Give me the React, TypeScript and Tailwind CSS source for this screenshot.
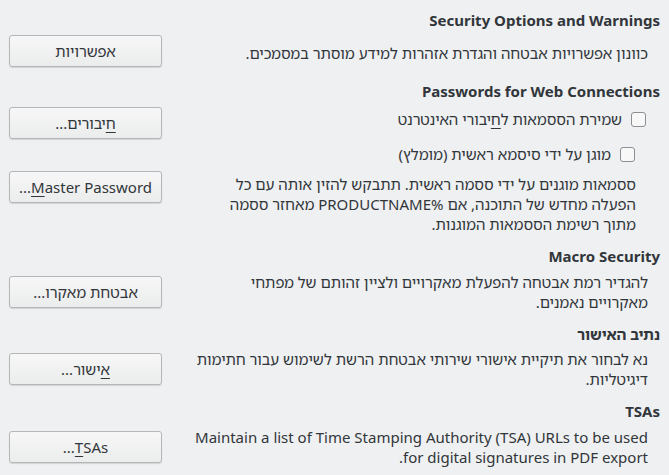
import type { ReactNode } from 'react';

/** כותרת קטע */
function Heading({ children }: { children: ReactNode }) {
  return <div className="h-5 font-bold leading-5">{children}</div>;
}

/** כפתור בסגנון Breeze */
function Button({ children }: { children: ReactNode }) {
  return (
    <button
      type="button"
      className="h-8 w-[153px] shrink-0 rounded-[3px] border border-[#b4b6b8] bg-gradient-to-b from-[#f7f7f7] to-[#ebecec] text-center leading-5 text-[#31363b] shadow-[0_1px_1px_rgba(0,0,0,0.12)]"
    >
      {children}
    </button>
  );
}

/** אות מקוצר מקלדת */
function Mn({ children }: { children: ReactNode }) {
  return <span className="underline underline-offset-[3px]">{children}</span>;
}

function CheckRow({ indent, children }: { indent: string; children: ReactNode }) {
  return (
    <div className={`flex h-5 items-center gap-[9px] ${indent}`}>
      <span className="h-[15px] w-[15px] shrink-0 rounded-[3px] border border-[#8c8f93] bg-[#f8f8f8]" />
      <span>{children}</span>
    </div>
  );
}

export default function App() {
  return (
    <div
      dir="rtl"
      className="h-[475px] w-[669px] overflow-hidden bg-[#eff0f1] px-[9px] pt-[10px] font-['Noto_Sans','Noto_Sans_Hebrew','DejaVu_Sans',sans-serif] text-[15px] leading-5 text-[#31363b]"
    >
      {/* Security Options and Warnings */}
      <Heading>Security Options and Warnings</Heading>
      <div className="mt-[5px] flex items-center gap-[30px]">
        <p className="min-w-0 flex-1 pr-3 pt-1">
          כוונון אפשרויות אבטחה והגדרת אזהרות למידע מוסתר במסמכים.
        </p>
        <Button>אפשרויות</Button>
      </div>

      {/* Passwords for Web Connections */}
      <div className="mt-[14px]">
        <Heading>Passwords for Web Connections</Heading>
      </div>
      <div className="mt-[6px] flex items-start gap-[30px]">
        <div className="min-w-0 flex-1 pt-[2px]">
          <CheckRow indent="pr-[14px]">
            שמירת הססמאות ל<Mn>ח</Mn>יבורי האינטרנט
          </CheckRow>
        </div>
        <Button>
          <Mn>ח</Mn>יבורים...
        </Button>
      </div>
      <div className="mt-[5px]">
        <CheckRow indent="pr-[25px]">מוגן על ידי סיסמא ראשית (מומלץ)</CheckRow>
      </div>
      <div className="mt-[7px] flex items-start gap-[46px]">
        <p className="min-w-0 flex-1 pr-[24px] pt-[3px]">
          ססמאות מוגנים על ידי ססמה ראשית. תתבקש להזין אותה עם כל הפעלה מחדש של התוכנה, אם %PRODUCTNAME מאחזר ססמה מתוך רשימת הססמאות המוגנות.
        </p>
        <Button>
          <Mn>M</Mn>aster Password...
        </Button>
      </div>

      {/* Macro Security */}
      <div className="mt-[12px]">
        <Heading>Macro Security</Heading>
      </div>
      <div className="mt-[6px] flex items-center gap-[30px]">
        <p className="min-w-0 flex-1 pr-3">
          להגדיר רמת אבטחה להפעלת מאקרויים ולציין זהותם של מפתחי מאקרויים נאמנים.
        </p>
        <Button>אבטחת מאקרו...</Button>
      </div>

      {/* נתיב האישור */}
      <div className="mt-[12px]">
        <Heading>נתיב האישור</Heading>
      </div>
      <div className="mt-[5px] flex items-center gap-[30px]">
        <p className="min-w-0 flex-1 pr-3">
          נא לבחור את תיקיית אישורי שירותי אבטחת הרשת לשימוש עבור חתימות דיגיטליות.
        </p>
        <Button>
          <Mn>א</Mn>ישור...
        </Button>
      </div>

      {/* TSAs */}
      <div className="mt-[12px]">
        <Heading>TSAs</Heading>
      </div>
      <div className="mt-[6px] flex items-center gap-[30px]">
        <p className="min-w-0 flex-1 pr-3">
          Maintain a list of Time Stamping Authority (TSA) URLs to be used for digital signatures in PDF export.
        </p>
        <Button>
          <Mn>T</Mn>SAs...
        </Button>
      </div>
    </div>
  );
}
